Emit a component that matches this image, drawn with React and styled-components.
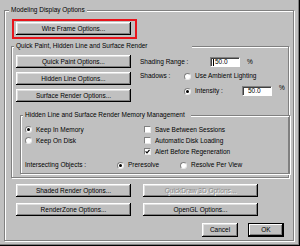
import React from 'react';
import styled, { createGlobalStyle } from 'styled-components';

const BG = '#c0c0c0';

const GlobalStyle = createGlobalStyle`
  html, body { margin: 0; padding: 0; background: ${BG}; }
  body {
    font-family: "Liberation Sans", Arial, sans-serif;
    font-size: 6.5px;
    line-height: 8px;
    color: #000;
  }
  * { box-sizing: border-box; }
`;

const Window = styled.div`
  width: 300px;
  height: 246px;
  background: ${BG};
  box-shadow: inset -1px -1px 0 #000, inset -2px -2px 0 #808080;
  padding: 10px 6px 0 4px;
`;

const Group = styled.div`
  position: relative;
  display: flex;
  flex-direction: column;
  align-items: flex-start;
  border: 1px solid #808080;
  box-shadow: inset 1px 1px 0 #fff, 1px 1px 0 #fff;
  width: ${p => (p.$w ? `${p.$w}px` : 'auto')};
  padding: ${p => p.$pad || '0'};
  margin: ${p => p.$margin || '0'};
`;

const Legend = styled.span`
  position: absolute;
  top: -5px;
  left: ${p => p.$left}px;
  padding: 0 ${p => p.$padR ?? 2}px 0 2px;
  background: ${BG};
  white-space: nowrap;
  line-height: 8px;
`;

const Highlight = styled.div`
  border: 2px solid #e8141b;
  padding: 1px 4px 2px 2px;
  margin: 8px 0 0 7px;
`;

const Button = styled.button`
  font: inherit;
  width: ${p => p.$w || 115}px;
  height: ${p => p.$h || 13}px;
  padding: 0;
  border: none;
  background: ${BG};
  color: ${p => (p.disabled ? '#8a8a8a' : '#000')};
  text-shadow: ${p => (p.disabled ? '1px 1px 0 #fff' : 'none')};
  box-shadow: ${p =>
    p.$default
      ? 'inset 0 0 0 1px #000, inset -2px -2px 0 #000, inset 2px 2px 0 #fff, inset -3px -3px 0 #808080'
      : 'inset -1px -1px 0 #000, inset 1px 1px 0 #fff, inset -2px -2px 0 #808080, inset 2px 2px 0 #dfdfdf'};
  display: flex;
  align-items: center;
  justify-content: center;
  white-space: nowrap;
`;

const TopSection = styled.div`
  display: flex;
  gap: 9px;
`;

const ButtonColumn = styled.div`
  display: flex;
  flex-direction: column;
  gap: 4px;
`;

const Controls = styled.div`
  display: flex;
  flex-direction: column;
  margin-top: 2px;
`;

const Row = styled.div`
  display: flex;
  align-items: center;
  height: 10px;
  margin-top: ${p => p.$mt || 0}px;
`;

const Label = styled.span`
  width: ${p => p.$w}px;
  flex: none;
  white-space: nowrap;
`;

const Field = styled.div`
  width: 30px;
  height: 10px;
  background: #fff;
  border: 1px solid;
  border-color: #808080 #fff #fff #808080;
  box-shadow: inset 1px 1px 0 #404040;
  display: flex;
  align-items: center;
  padding-left: ${p => p.$pl || 4}px;
  flex: none;
`;

const Caret = styled.span`
  width: 1px;
  height: 7px;
  background: #000;
  margin-right: 1px;
`;

const Percent = styled.span`
  margin-left: 7px;
  align-self: ${p => (p.$raised ? 'flex-start' : 'center')};
  margin-top: ${p => (p.$raised ? -2 : 0)}px;
`;

const RadioDot = styled.span`
  width: 7px;
  height: 7px;
  flex: none;
  border-radius: 50%;
  background: #fff;
  border: 1px solid;
  border-color: #808080 #e8e8e8 #e8e8e8 #808080;
  display: flex;
  align-items: center;
  justify-content: center;
  margin-right: 4px;
  &::after {
    content: '';
    display: ${p => (p.$on ? 'block' : 'none')};
    width: 3px;
    height: 3px;
    border-radius: 50%;
    background: #000;
  }
`;

const Box = styled.span`
  width: 7px;
  height: 7px;
  flex: none;
  background: #fff;
  border: 1px solid;
  border-color: #808080 #e8e8e8 #e8e8e8 #808080;
  margin-right: 4px;
  display: flex;
  align-items: center;
  justify-content: center;
`;

const Option = styled.div`
  display: flex;
  align-items: center;
  white-space: nowrap;
  width: ${p => (p.$w ? `${p.$w}px` : 'auto')};
`;

const OptionsGrid = styled.div`
  display: grid;
  grid-template-columns: 119px 1fr;
  grid-auto-rows: 11px;
  align-items: center;
`;

const BottomGrid = styled.div`
  display: grid;
  grid-template-columns: 115px 115px;
  column-gap: 12px;
  row-gap: 6px;
  margin: 6px 0 0 11px;
`;

const DialogButtons = styled.div`
  display: flex;
  gap: 10px;
  align-self: flex-end;
  margin: 7px 9px 0 0;
`;

const Radio = ({ on, children, w }) => (
  <Option $w={w}>
    <RadioDot $on={on} />
    {children}
  </Option>
);

const Check = ({ on, children }) => (
  <Option>
    <Box>
      {on && (
        <svg width="5" height="5" viewBox="0 0 5 5">
          <path d="M0.6 2.4 L2 3.9 L4.5 0.8" fill="none" stroke="#000" strokeWidth="1.1" />
        </svg>
      )}
    </Box>
    {children}
  </Option>
);

export default function App() {
  return (
    <>
      <GlobalStyle />
      <Window>
        <Group $pad="0 0 3px 0">
          <Legend $left={4}>Modeling Display Options</Legend>
          <Highlight>
            <Button>Wire Frame Options...</Button>
          </Highlight>

          <Group $w={278} $margin="7px 0 0 6px" $pad="8px 0 3px 4px">
            <Legend $left={2} $padR={44}>Quick Paint, Hidden Line and Surface Render</Legend>
            <TopSection>
              <ButtonColumn>
                <Button>Quick Paint Options...</Button>
                <Button>Hidden Line Options...</Button>
                <Button>Surface Render Options...</Button>
              </ButtonColumn>
              <Controls>
                <Row>
                  <Label $w={70}>Shading Range :</Label>
                  <Field $pl={2}>
                    <Caret />
                    50.0
                  </Field>
                  <Percent>%</Percent>
                </Row>
                <Row $mt={4}>
                  <Label $w={44}>Shadows :</Label>
                  <Radio>Use Ambient Lighting</Radio>
                </Row>
                <Row $mt={5}>
                  <Label $w={44} />
                  <Radio on w={58}>Intensity :</Radio>
                  <Field $pl={5}>50.0</Field>
                  <Percent $raised>%</Percent>
                </Row>
              </Controls>
            </TopSection>

            <Group $w={270} $margin="13px 0 0 4px" $pad="8px 0 3px 4px">
              <Legend $left={2} $padR={6}>Hidden Line and Surface Render Memory Management</Legend>
              <OptionsGrid>
                <Radio on>Keep In Memory</Radio>
                <Check>Save Between Sessions</Check>
                <Radio>Keep On Disk</Radio>
                <Check>Automatic Disk Loading</Check>
                <span />
                <Check on>Alert Before Regeneration</Check>
              </OptionsGrid>
              <Row $mt={3}>
                <Label $w={92}>Intersecting Objects :</Label>
                <Radio on w={63}>Preresolve</Radio>
                <Radio>Resolve Per View</Radio>
              </Row>
            </Group>
          </Group>

          <BottomGrid>
            <Button>Shaded Render Options...</Button>
            <Button disabled>QuickDraw 3D Options...</Button>
            <Button>RenderZone Options...</Button>
            <Button>OpenGL Options...</Button>
          </BottomGrid>

          <DialogButtons>
            <Button $w={36} $h={14}>Cancel</Button>
            <Button $w={36} $h={14} $default>OK</Button>
          </DialogButtons>
        </Group>
      </Window>
    </>
  );
}
